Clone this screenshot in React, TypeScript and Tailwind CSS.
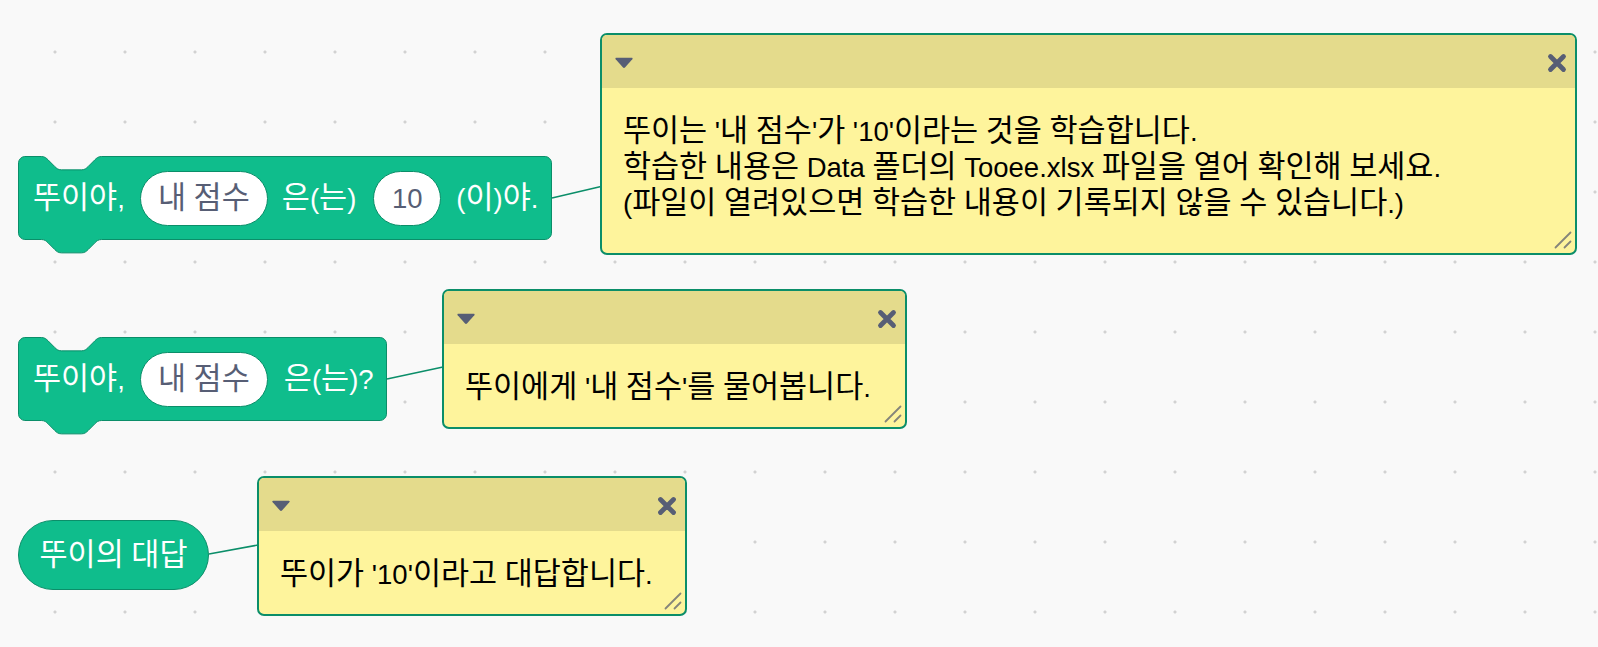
import React from "react";

const FONT = "font-['Liberation_Sans','Noto_Sans_CJK_KR',sans-serif]";

function T({ text }: { text: string }) {
  const parts = text.split(/([\x00-\x7F]+)/).filter((p) => p.length > 0);
  return (
    <span className="whitespace-pre">
      {parts.map((p, i) =>
        /^[\x00-\x7F]+$/.test(p) ? (
          <span key={i} className="text-[27.5px] leading-none">
            {p}
          </span>
        ) : (
          <React.Fragment key={i}>{p}</React.Fragment>
        )
      )}
    </span>
  );
}

function blockPath(W: number, H: number) {
  const s = 1.67;
  const r = 6.7;
  const n0 = 23.4;
  const n = (v: number) => +(v * s).toFixed(2);
  const notch = `c ${n(2)},0 ${n(3)},${n(1)} ${n(4)},${n(2)} l ${n(4)},${n(4)} c ${n(1)},${n(1)} ${n(2)},${n(2)} ${n(4)},${n(2)} h ${n(12)} c ${n(2)},0 ${n(3)},${-n(1)} ${n(4)},${-n(2)} l ${n(4)},${-n(4)} c ${n(1)},${-n(1)} ${n(2)},${-n(2)} ${n(4)},${-n(2)}`;
  const notchRev = `c ${-n(2)},0 ${-n(3)},${n(1)} ${-n(4)},${n(2)} l ${-n(4)},${n(4)} c ${-n(1)},${n(1)} ${-n(2)},${n(2)} ${-n(4)},${n(2)} h ${-n(12)} c ${-n(2)},0 ${-n(3)},${-n(1)} ${-n(4)},${-n(2)} l ${-n(4)},${-n(4)} c ${-n(1)},${-n(1)} ${-n(2)},${-n(2)} ${-n(4)},${-n(2)}`;
  return `M 0.5,${r} A ${r} ${r} 0 0 1 ${r},0.5 H ${n0} ${notch} H ${W - r} A ${r} ${r} 0 0 1 ${W - 0.5},${r} V ${H - r} A ${r} ${r} 0 0 1 ${W - r},${H - 0.5} H ${n0 + n(36)} ${notchRev} H ${r} A ${r} ${r} 0 0 1 0.5,${H - r} Z`;
}

function StackBlock({ width, className, children }: { width: number; className: string; children: React.ReactNode }) {
  const H = 84;
  return (
    <div className={`absolute ${className} h-[84px]`} style={{ width }}>
      <svg className="absolute left-0 top-0 overflow-visible" width={width} height={H}>
        <path d={blockPath(width, H)} fill="#0fbd8c" stroke="#0b8e69" strokeWidth="1" />
      </svg>
      <div className={`relative flex h-full items-center pl-[15px] text-[30.5px] text-white ${FONT}`}>{children}</div>
    </div>
  );
}

function Oval({ w, children }: { w: string; children: React.ReactNode }) {
  return (
    <div className={`flex h-[55px] ${w} shrink-0 items-center justify-center rounded-full border border-[#0b8e69] bg-white text-[#575e75]`}>
      {children}
    </div>
  );
}

function Triangle() {
  return (
    <svg width="20" height="14" viewBox="0 0 20 14">
      <path d="M2.3 1.8 H17.7 Q19.4 1.8 18.3 3.2 L11.2 11.3 Q10 12.6 8.8 11.3 L1.7 3.2 Q0.6 1.8 2.3 1.8 Z" fill="#575e75" />
    </svg>
  );
}

function Close() {
  return (
    <svg width="20" height="20" viewBox="0 0 20 20">
      <path d="M3.5 3.5 L16.5 16.5 M16.5 3.5 L3.5 16.5" stroke="#575e75" strokeWidth="4.8" strokeLinecap="round" />
    </svg>
  );
}

function Comment({ className, bodyH, children }: { className: string; bodyH: string; children: React.ReactNode }) {
  return (
    <div className={`absolute ${className} flex flex-col overflow-hidden rounded-[7px] border-2 border-[#0b8e69] bg-[#fef49c]`}>
      <div className="flex h-[54px] items-center justify-between bg-[#e4db8c] pl-[12px] pr-[8px] pt-[3px]">
        <Triangle />
        <Close />
      </div>
      <div className={`relative ${bodyH} pl-[21px] pt-[24px] text-[30.5px] leading-[36px] text-black ${FONT}`}>
        {children}
        <svg className="absolute bottom-[4px] right-[3px]" width="18" height="18" viewBox="0 0 18 18">
          <path d="M1.5 16.5 L16.5 1.5 M10.5 16.5 L16.5 10.5" stroke="#85857a" strokeWidth="1.8" strokeLinecap="round" />
        </svg>
      </div>
    </div>
  );
}

export default function App() {
  return (
    <div className="relative h-[647px] w-[1598px] overflow-hidden bg-[#f9f9f9] bg-[radial-gradient(circle,#d2d2d2_1.3px,transparent_1.8px)] bg-[length:70px_70px] bg-[position:20px_17px]">
      <svg className="pointer-events-none absolute left-0 top-0" width="1598" height="647">
        <g stroke="#0b8e69" strokeWidth="1.6">
          <line x1="552" y1="198" x2="601" y2="186.5" />
          <line x1="387" y1="379" x2="443" y2="367" />
          <line x1="209" y1="554" x2="258" y2="545" />
        </g>
      </svg>

      <StackBlock width={534} className="left-[18px] top-[156px]">
        <span className="mr-[15px]"><T text="뚜이야," /></span>
        <Oval w="w-[128px]"><T text="내 점수" /></Oval>
        <span className="ml-[14px] mr-[17px]"><T text="은(는)" /></span>
        <Oval w="w-[68px]"><T text="10" /></Oval>
        <span className="ml-[15px]"><T text="(이)야." /></span>
      </StackBlock>

      <StackBlock width={369} className="left-[18px] top-[337px]">
        <span className="mr-[15px]"><T text="뚜이야," /></span>
        <Oval w="w-[128px]"><T text="내 점수" /></Oval>
        <span className="ml-[16px]"><T text="은(는)?" /></span>
      </StackBlock>

      <div className={`absolute left-[18px] top-[520px] flex h-[70px] w-[191px] items-center justify-center rounded-full border border-[#0b8e69] bg-[#0fbd8c] text-[30.5px] text-white ${FONT}`}>
        <T text="뚜이의 대답" />
      </div>

      <Comment className="left-[600px] top-[33px] w-[977px] h-[222px]" bodyH="h-[166px]">
        <div><T text="뚜이는 '내 점수'가 '10'이라는 것을 학습합니다." /></div>
        <div><T text="학습한 내용은 Data 폴더의 Tooee.xlsx 파일을 열어 확인해 보세요." /></div>
        <div><T text="(파일이 열려있으면 학습한 내용이 기록되지 않을 수 있습니다.)" /></div>
      </Comment>

      <Comment className="left-[442px] top-[289px] w-[465px] h-[140px]" bodyH="h-[84px]">
        <div><T text="뚜이에게 '내 점수'를 물어봅니다." /></div>
      </Comment>

      <Comment className="left-[257px] top-[476px] w-[430px] h-[140px]" bodyH="h-[84px]">
        <div><T text="뚜이가 '10'이라고 대답합니다." /></div>
      </Comment>
    </div>
  );
}
